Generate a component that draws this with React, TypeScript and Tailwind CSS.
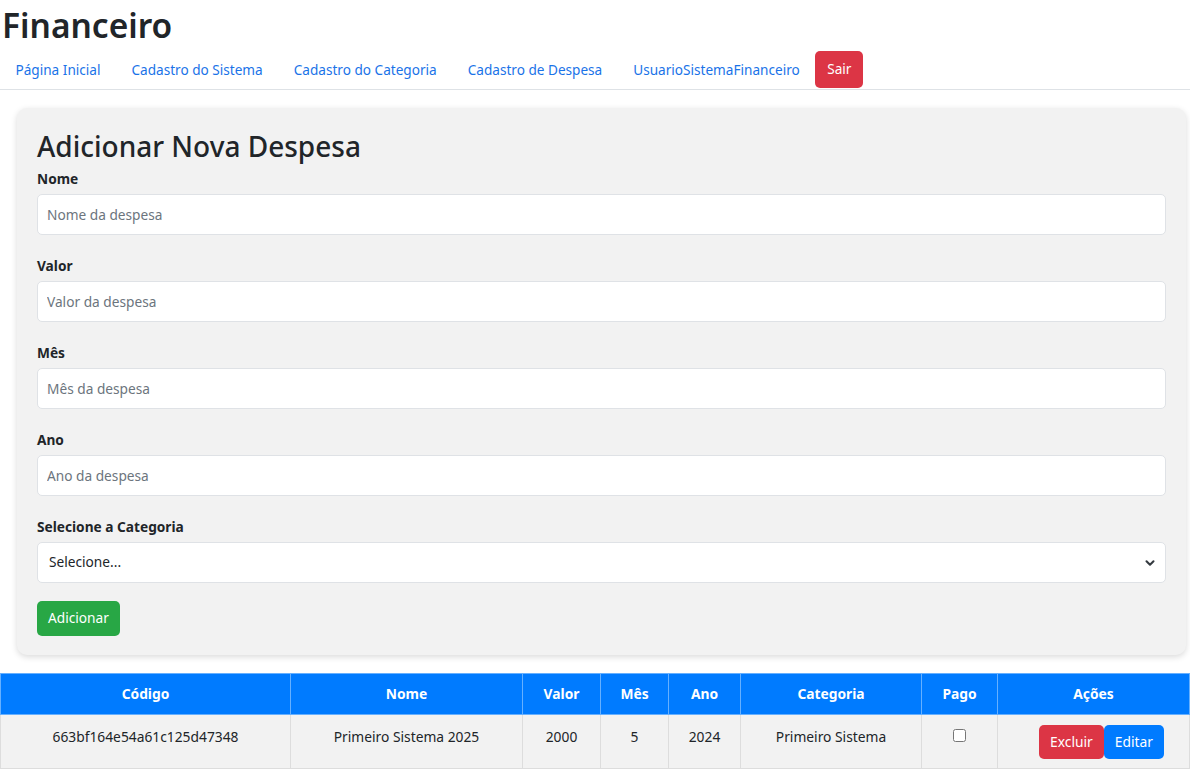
import { ChevronDown } from 'lucide-react';

const FONT = "font-['Segoe_UI','Noto_Sans',sans-serif]";

const navLinks = [
  'Página Inicial',
  'Cadastro do Sistema',
  'Cadastro do Categoria',
  'Cadastro de Despesa',
  'UsuarioSistemaFinanceiro',
];

const fields = [
  { label: 'Nome', placeholder: 'Nome da despesa' },
  { label: 'Valor', placeholder: 'Valor da despesa' },
  { label: 'Mês', placeholder: 'Mês da despesa' },
  { label: 'Ano', placeholder: 'Ano da despesa' },
];

const columns = [
  { title: 'Código', width: 'w-[290px]' },
  { title: 'Nome', width: 'w-[232px]' },
  { title: 'Valor', width: 'w-[78px]' },
  { title: 'Mês', width: 'w-[68px]' },
  { title: 'Ano', width: 'w-[72px]' },
  { title: 'Categoria', width: 'w-[181px]' },
  { title: 'Pago', width: 'w-[76px]' },
  { title: 'Ações', width: '' },
];

const row = ['663bf164e54a61c125d47348', 'Primeiro Sistema 2025', '2000', '5', '2024', 'Primeiro Sistema'];

export default function App() {
  return (
    <div className={`${FONT} min-h-screen bg-white text-[#212529]`}>
      <h1 className="pl-[2px] pt-[4px] text-[33.5px] font-semibold leading-[42px]">Financeiro</h1>

      <nav className="mt-[5px] flex items-center border-b border-[#dee2e6] pb-px">
        {navLinks.map((link) => (
          <a key={link} className="px-[15.5px] py-2 text-[13.6px] leading-[21px] text-[#1a73e8]">
            {link}
          </a>
        ))}
        <button className="h-[37px] rounded-[5px] bg-[#dc3545] px-[12px] text-[13.6px] text-white">
          Sair
        </button>
      </nav>

      <section className="mx-[17px] mt-[18px] w-[1169px] rounded-[10px] bg-[#f2f2f2] px-5 pb-[19px] pt-[20px] shadow-[0_2px_6px_rgba(0,0,0,0.15)]">
        <h2 className="text-[28px] font-medium leading-[36px]">Adicionar Nova Despesa</h2>

        <div className="mt-[4px] flex flex-col gap-[20px]">
          {fields.map((field) => (
            <div key={field.label}>
              <label className="block text-[13.7px] font-bold leading-[21px]">{field.label}</label>
              <input
                placeholder={field.placeholder}
                className="mt-[5px] h-[41px] w-full rounded-[5px] border border-[#dfe2e6] bg-white px-[9px] text-[13.7px] placeholder:text-[#6c757d]"
              />
            </div>
          ))}

          <div>
            <label className="block text-[13.7px] font-bold leading-[21px]">Selecione a Categoria</label>
            <div className="mt-[5px] flex h-[41px] w-full items-center justify-between rounded-[5px] border border-[#dfe2e6] bg-white pl-[11px] pr-[8px] text-[13.7px] text-[#212529]">
              <span>Selecione...</span>
              <ChevronDown size={14} strokeWidth={3.5} className="text-[#343a40]" />
            </div>
          </div>
        </div>

        <button className="mt-[18px] h-[35px] rounded-[5px] bg-[#28a745] px-[11px] text-[13.7px] text-white">
          Adicionar
        </button>
      </section>

      <table className="mt-[18px] w-full border-collapse text-[13.8px]">
        <thead>
          <tr className="bg-[#007bff] text-white">
            {columns.map((col) => (
              <th
                key={col.title}
                className={`${col.width} border border-[#66b0ff] py-[10px] text-center font-bold leading-[20px]`}
              >
                {col.title}
              </th>
            ))}
          </tr>
        </thead>
        <tbody>
          <tr className="bg-[#f2f2f2]">
            {row.map((cell, i) => (
              <td key={i} className="border border-[#dddddd] px-2 pb-[9px] pt-[10px] text-center align-top leading-[24px]">
                {cell}
              </td>
            ))}
            <td className="border border-[#dddddd] pt-[10px] text-center align-top">
              <input type="checkbox" className="mt-[4px] h-[13px] w-[13px]" />
            </td>
            <td className="border border-[#dddddd] pb-[9px] pl-[16px] pt-[10px] text-center align-top">
              <div className="flex justify-center">
                <button className="h-[34px] rounded-[5px] bg-[#dc3545] px-[11px] text-white">Excluir</button>
                <button className="h-[34px] rounded-[5px] bg-[#007bff] px-[11px] text-white">Editar</button>
              </div>
            </td>
          </tr>
        </tbody>
      </table>
    </div>
  );
}
